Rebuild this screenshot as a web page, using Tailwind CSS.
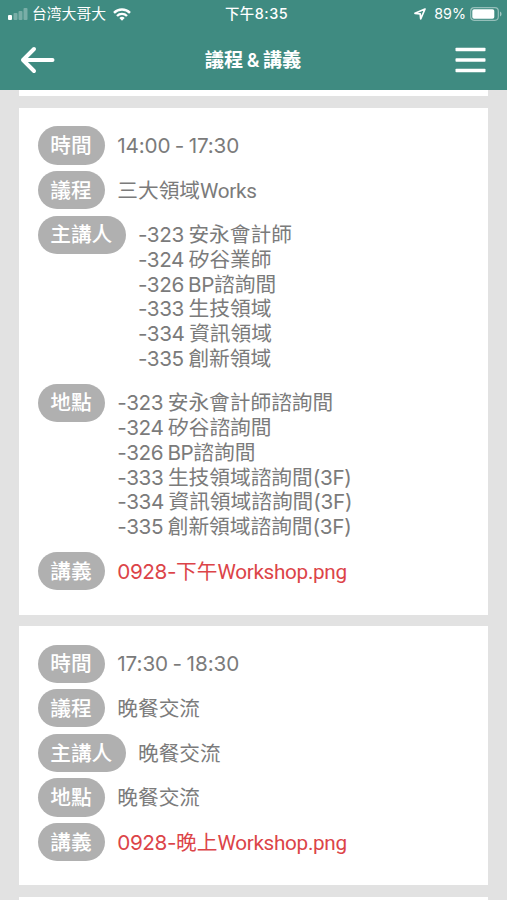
<!DOCTYPE html>
<html lang="zh-Hant">
  <head>
    <meta charset="UTF-8" />
    <meta name="viewport" content="width=device-width, initial-scale=1.0" />
    <title>議程＆講義</title>
    <script src="https://cdn.jsdelivr.net/npm/@tailwindcss/browser@4"></script>
  </head>
  <body
    class="h-[900px] overflow-hidden bg-[#e2e2e2] font-['Inter','Noto_Sans_CJK_TC',sans-serif] text-[20.7px] leading-[24.7px] text-[#7b7b7b]"
  >
    <header class="h-[90px] bg-[#3f8b81] text-white">
      <!-- status bar -->
      <div class="grid h-7 grid-cols-[1fr_auto_1fr] items-center pl-2 pr-[5px] text-[14px] leading-5">
        <div class="flex items-center">
          <svg class="mr-1 h-3 w-5" viewBox="0 0 20 12" fill="#fff">
            <rect x="0" y="7" width="4" height="5" rx="1" />
            <rect x="5.5" y="5" width="4" height="7" rx="1" opacity=".3" />
            <rect x="10.5" y="3" width="4" height="9" rx="1" opacity=".3" />
            <rect x="15.5" y="0" width="4" height="12" rx="1" opacity=".3" />
          </svg>
          <span class="text-[14.8px]">台湾大哥大</span>
          <svg class="ml-[7px] h-[13px] w-[18px]" viewBox="0 0 18 13" fill="none" stroke="#fff" stroke-width="2.4">
            <path d="M1 4.8a11.3 11.3 0 0 1 16 0" />
            <path d="M4 8a7 7 0 0 1 10 0" />
            <path d="M9 12.7 6.3 10a3.9 3.9 0 0 1 5.4 0z" fill="#fff" stroke="none" />
          </svg>
        </div>
        <p class="pl-[3px] text-[14.4px] font-medium tracking-[0.5px]">下午8:35</p>
        <div class="flex items-center justify-end">
          <svg class="mr-2 h-3 w-3" viewBox="0 0 12 12" fill="none" stroke="#fff" stroke-width="1.7" stroke-linejoin="round">
            <path d="M11 1 1 5.3l5.2.6.5 5.1z" />
          </svg>
          <span class="text-[14.3px]">89%</span>
          <svg class="ml-1 h-[14px] w-8" viewBox="0 0 32 14">
            <rect x=".7" y=".7" width="27.6" height="12.6" rx="3.5" fill="none" stroke="#fff" stroke-opacity=".45" stroke-width="1.2" />
            <rect x="2.3" y="2.3" width="22" height="9.4" rx="1.8" fill="#fff" />
            <path d="M30 4.6a2.6 2.6 0 0 1 0 4.8z" fill="#fff" fill-opacity=".5" />
          </svg>
        </div>
      </div>

      <!-- nav bar -->
      <div class="grid h-[62px] grid-cols-[1fr_auto_1fr] items-center pl-5 pr-[21px] pt-[2px]">
        <button aria-label="返回">
          <svg class="h-7 w-[35px]" viewBox="0 0 35 28" fill="none" stroke="#fff" stroke-width="4" stroke-linecap="round" stroke-linejoin="round">
            <path d="M14 3 3 14l11 11M3 14h29.5" />
          </svg>
        </button>
        <h1 class="text-[19.2px] font-bold leading-6 [word-spacing:-1px]">議程 <span class="font-semibold">&amp;</span> 講義</h1>
        <button class="justify-self-end" aria-label="選單">
          <svg class="h-[26px] w-[31px]" viewBox="0 0 31 26" fill="#fff">
            <rect x=".5" y=".7" width="30" height="3.6" rx=".8" />
            <rect x=".5" y="11.2" width="30" height="3.6" rx=".8" />
            <rect x=".5" y="21.7" width="30" height="3.6" rx=".8" />
          </svg>
        </button>
      </div>
    </header>

    <main class="px-[19px] [word-spacing:-1.2px]">
      <section class="h-1.5 bg-white"></section>

      <section class="mt-3 flex h-[506.5px] flex-col gap-[6.4px] bg-white px-[19px] pt-[18.4px]">
        <div class="flex items-start">
          <b class="mr-[12.2px] rounded-full bg-[#b0b0b0] pt-[7.75px] pr-[13.5px] pb-[5.75px] pl-[12.2px] font-medium text-white">時間</b>
          <p class="pt-[7.75px] pb-[5.75px] whitespace-nowrap tracking-[-0.15px]">14:00 - 17:30</p>
        </div>
        <div class="flex items-start">
          <b class="mr-[12.2px] rounded-full bg-[#b0b0b0] pt-[7.75px] pr-[13.5px] pb-[5.75px] pl-[12.2px] font-medium text-white">議程</b>
          <p class="pt-[7.75px] pb-[5.75px] whitespace-nowrap">三大領域<span class="font-['Roboto'] tracking-[-0.3px]">Works</span></p>
        </div>
        <div class="flex items-start">
          <b class="mr-[12.2px] rounded-full bg-[#b0b0b0] pt-[7.75px] pr-[13.5px] pb-[5.75px] pl-[12.2px] font-medium text-white">主講人</b>
          <ul class="pt-[7.75px] pb-[5.75px] whitespace-nowrap">
            <li><span class="tracking-[-0.4px]">-323</span> 安永會計師</li>
            <li><span class="tracking-[-0.4px]">-324</span> 矽谷業師</li>
            <li><span class="tracking-[-0.4px]">-326 BP</span>諮詢間</li>
            <li><span class="tracking-[-0.4px]">-333</span> 生技領域</li>
            <li><span class="tracking-[-0.4px]">-334</span> 資訊領域</li>
            <li><span class="tracking-[-0.4px]">-335</span> 創新領域</li>
          </ul>
        </div>
        <div class="flex items-start">
          <b class="mr-[12.2px] rounded-full bg-[#b0b0b0] pt-[7.75px] pr-[13.5px] pb-[5.75px] pl-[12.2px] font-medium text-white">地點</b>
          <ul class="pt-[7.75px] pb-[5.75px] whitespace-nowrap">
            <li><span class="tracking-[-0.4px]">-323</span> 安永會計師諮詢間</li>
            <li><span class="tracking-[-0.4px]">-324</span> 矽谷諮詢間</li>
            <li><span class="tracking-[-0.4px]">-326 BP</span>諮詢間</li>
            <li><span class="tracking-[-0.4px]">-333</span> 生技領域諮詢間<span class="tracking-[-0.3px]">(3F)</span></li>
            <li><span class="tracking-[-0.4px]">-334</span> 資訊領域諮詢間<span class="tracking-[-0.3px]">(3F)</span></li>
            <li><span class="tracking-[-0.4px]">-335</span> 創新領域諮詢間<span class="tracking-[-0.3px]">(3F)</span></li>
          </ul>
        </div>
        <div class="flex items-start">
          <b class="mr-[12.2px] rounded-full bg-[#b0b0b0] pt-[7.75px] pr-[13.5px] pb-[5.75px] pl-[12.2px] font-medium text-white">講義</b>
          <a class="pt-[7.75px] pb-[5.75px] whitespace-nowrap text-[#dc4448]"><span class="tracking-[-0.4px]">0928-</span>下午<span class="font-['Roboto'] tracking-[-0.3px]">Workshop.png</span></a>
        </div>
      </section>

      <section class="mt-[11.8px] flex h-[259px] flex-col gap-[6.4px] bg-white px-[19px] pt-[18.4px]">
        <div class="flex items-start">
          <b class="mr-[12.2px] rounded-full bg-[#b0b0b0] pt-[7.75px] pr-[13.5px] pb-[5.75px] pl-[12.2px] font-medium text-white">時間</b>
          <p class="pt-[7.75px] pb-[5.75px] whitespace-nowrap tracking-[-0.08px]">17:30 - 18:30</p>
        </div>
        <div class="flex items-start">
          <b class="mr-[12.2px] rounded-full bg-[#b0b0b0] pt-[7.75px] pr-[13.5px] pb-[5.75px] pl-[12.2px] font-medium text-white">議程</b>
          <p class="pt-[7.75px] pb-[5.75px] whitespace-nowrap">晚餐交流</p>
        </div>
        <div class="flex items-start">
          <b class="mr-[12.2px] rounded-full bg-[#b0b0b0] pt-[7.75px] pr-[13.5px] pb-[5.75px] pl-[12.2px] font-medium text-white">主講人</b>
          <p class="pt-[7.75px] pb-[5.75px] whitespace-nowrap">晚餐交流</p>
        </div>
        <div class="flex items-start">
          <b class="mr-[12.2px] rounded-full bg-[#b0b0b0] pt-[7.75px] pr-[13.5px] pb-[5.75px] pl-[12.2px] font-medium text-white">地點</b>
          <p class="pt-[7.75px] pb-[5.75px] whitespace-nowrap">晚餐交流</p>
        </div>
        <div class="flex items-start">
          <b class="mr-[12.2px] rounded-full bg-[#b0b0b0] pt-[7.75px] pr-[13.5px] pb-[5.75px] pl-[12.2px] font-medium text-white">講義</b>
          <a class="pt-[7.75px] pb-[5.75px] whitespace-nowrap text-[#dc4448]"><span class="tracking-[-0.4px]">0928-</span>晚上<span class="font-['Roboto'] tracking-[-0.3px]">Workshop.png</span></a>
        </div>
      </section>

      <section class="mt-3 h-5 bg-white"></section>
    </main>
  </body>
</html>
